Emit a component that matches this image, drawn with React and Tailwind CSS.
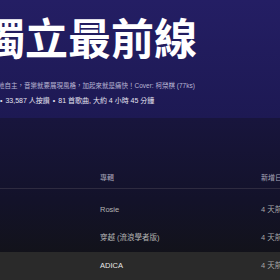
export default function App() {
  const rows = [
    { album: 'Rosie', added: '4 天前' },
    { album: '穿越 (流浪學者版)', added: '4 天前' },
    { album: 'ADICA', added: '4 天前', active: true },
  ];

  return (
    <div
      className="w-[280px] h-[280px] overflow-hidden bg-[#121212] text-white"
      style={{ fontFamily: '"Liberation Sans", "Noto Sans CJK TC", sans-serif' }}
    >
      <header className="h-[118px] bg-gradient-to-b from-[#241e64] to-[#1d1953] pt-[13px]">
        <h1
          className="ml-[-18px] whitespace-nowrap text-[43px] font-bold leading-[46px]"
          style={{ fontFamily: '"Noto Sans CJK TC", sans-serif' }}
        >
          獨立最前線
        </h1>
        <p className="mt-[22px] ml-[-2px] whitespace-nowrap text-[6.5px] leading-[10px] text-[#b9b6d4]">
          地自主，音樂就要展現風格，加起來就是痛快！Cover: 柯榮棋 (77ks)
        </p>
        <p className="mt-[5px] flex items-center gap-[3px] whitespace-nowrap text-[7px] leading-[10px] text-[#e4e2f0]">
          <span>•</span>
          <span>33,587 人按讚</span>
          <span>•</span>
          <span>81 首歌曲, 大約 4 小時 45 分鐘</span>
        </p>
      </header>

      <section className="bg-gradient-to-b from-[#18153d] via-[#13122a] to-[#121212]">
        <div className="h-[51px]" />
        <div className="grid h-[20px] w-[320px] grid-cols-[100px_161px_1fr] items-center border-b border-[#2e2b40] text-[7px] text-[#a9a7b8]">
          <span />
          <span>專輯</span>
          <span>新增日期</span>
        </div>
        <div className="pt-[7px]">
          {rows.map((row) => (
            <div
              key={row.album}
              className={`grid h-[28px] w-[320px] grid-cols-[100px_161px_1fr] items-center text-[7.5px] ${
                row.active ? 'bg-[#2a2a2a] text-[#e8e8e8]' : 'text-[#b3b3b3]'
              }`}
            >
              <span />
              <span className="whitespace-nowrap">{row.album}</span>
              <span className="whitespace-nowrap text-[#a7a7a7]">{row.added}</span>
            </div>
          ))}
        </div>
      </section>
    </div>
  );
}
